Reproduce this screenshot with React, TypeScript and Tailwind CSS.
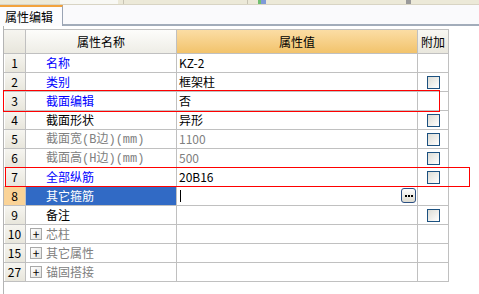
import React from 'react';

type Row = {
  no: string;
  name: string;
  value?: string;
  tone: 'blue' | 'black' | 'gray';
  check?: boolean;
  expand?: boolean;
  active?: boolean;
};

const rows: Row[] = [
  { no: '1', name: '名称', value: 'KZ-2', tone: 'blue' },
  { no: '2', name: '类别', value: '框架柱', tone: 'blue', check: true },
  { no: '3', name: '截面编辑', value: '否', tone: 'blue' },
  { no: '4', name: '截面形状', value: '异形', tone: 'black', check: true },
  { no: '5', name: '截面宽(B边)(mm)', value: '1100', tone: 'gray', check: true },
  { no: '6', name: '截面高(H边)(mm)', value: '500', tone: 'gray', check: true },
  { no: '7', name: '全部纵筋', value: '20B16', tone: 'blue', check: true },
  { no: '8', name: '其它箍筋', tone: 'black', active: true },
  { no: '9', name: '备注', tone: 'black', check: true },
  { no: '10', name: '芯柱', tone: 'gray', expand: true },
  { no: '15', name: '其它属性', tone: 'gray', expand: true },
  { no: '27', name: '锚固搭接', tone: 'gray', expand: true },
];

const toneClass = {
  blue: 'text-[#0000ff]',
  black: 'text-black',
  gray: 'text-[#808080]',
};

// latin runs get a fixed-width face so they take the room they take in the original
function Name({ text }: { text: string }) {
  const parts = text.split(/([()A-Za-z]+)/).filter(Boolean);
  return (
    <span>
      {parts.map((p, i) =>
        /^[()A-Za-z]+$/.test(p) ? (
          <span key={i} className="font-['Liberation_Mono',monospace]">
            {p}
          </span>
        ) : (
          <span key={i}>{p}</span>
        )
      )}
    </span>
  );
}

function CheckBox() {
  return (
    <div className="w-[13px] h-[13px] border border-[#1c5180] bg-linear-to-br from-[#dcdcd5] to-white" />
  );
}

function PlusBox() {
  return (
    <div className="w-[12px] h-[12px] border border-[#a8a8a8] bg-linear-to-br from-white to-[#e4e4e0] flex items-center justify-center text-black text-[12px] leading-none">
      +
    </div>
  );
}

export default function App() {
  return (
    <div className="w-[479px] h-[294px] bg-white overflow-hidden relative font-['Noto_Sans_CJK_SC',sans-serif] text-[12px] leading-none text-black">
      {/* toolbar remnant */}
      <div className="h-[5px] bg-[#ece9d8] border-b border-[#d8d4c4] flex">
        <div className="w-[60px]" />
        <div className="w-[58px] bg-[#f8f8f4]" />
        <div className="w-[6px] border-r border-[#c8c4b4]" />
        <div className="w-[124px] border-r border-[#c8c4b4]" />
        <div className="w-[10px]" />
        <div className="w-[3px] bg-[#6fbf6f]" />
        <div className="w-[5px] bg-[#7f9ad8]" />
        <div className="w-[140px]" />
        <div className="w-[5px] bg-[#9a9a9a]" />
      </div>

      {/* tab bar */}
      <div className="flex h-[21px] bg-[#fafafc]">
        <div className="w-[63px] border-t-2 border-t-[#f2a23c] border-r border-r-[#9aa4b4] bg-[#fcfcfe] flex items-center pl-[5px]">
          属性编辑
        </div>
        <div className="flex-1 border-b-2 border-[#a2acba]" />
      </div>

      {/* panel */}
      <div className="ml-[3px] h-full border-l border-[#b4b4b4] pt-[3px]">
        <div className="w-[445px] border-t border-[#c0c0c0]">
          {/* header */}
          <div className="flex h-[24px]">
            <div className="w-[22px] border-r border-b border-[#c0c0c0] bg-linear-to-b from-[#f6f5f0] to-[#e8e6dc]" />
            <div className="w-[151px] border-r border-b border-[#c0c0c0] bg-linear-to-b from-[#fdfdfb] to-[#eeede6] flex items-center justify-center">
              属性名称
            </div>
            <div className="w-[241px] border-r border-b border-[#c0c0c0] bg-linear-to-b from-[#fbdda4] to-[#f2c36b] flex items-center justify-center">
              属性值
            </div>
            <div className="w-[31px] border-r border-b border-[#c0c0c0] bg-linear-to-b from-[#f8f7f2] to-[#e9e7dd] flex items-center justify-center">
              附加
            </div>
          </div>

          {rows.map((r) => (
            <div key={r.no} className="flex h-[19px]">
              <div
                className={`w-[22px] border-r border-b border-[#c0c0c0] flex items-center justify-center ${
                  r.active
                    ? 'bg-[#fad397]'
                    : 'bg-linear-to-b from-[#f6f5f0] to-[#e8e6dc] shadow-[inset_1px_0_0_#ffffff]'
                }`}
              >
                {r.no}
              </div>
              <div
                className={`w-[151px] border-r border-b border-[#c0c0c0] flex items-center ${
                  r.active ? 'bg-[#316ac5] text-white' : toneClass[r.tone]
                } ${r.expand ? 'pl-[4px] gap-[4px]' : 'pl-[20px]'}`}
              >
                {r.expand && <PlusBox />}
                <Name text={r.name} />
              </div>
              <div className="w-[241px] border-r border-b border-[#c0c0c0] flex items-center pl-[2px] relative">
                {r.value && <span className={r.tone === 'gray' ? 'text-[#808080]' : 'text-black'}>{r.value}</span>}
                {r.active && (
                  <>
                    <div className="w-px h-[12px] bg-black ml-[1px]" />
                    <div className="absolute right-[1px] top-[1px] w-[15px] h-[15px] rounded-[3px] border border-[#2b4f82] bg-linear-to-b from-white to-[#dedbd0] flex items-center justify-center gap-[1px] pt-[1px]">
                      <span className="w-[2px] h-[2px] bg-black" />
                      <span className="w-[2px] h-[2px] bg-black" />
                      <span className="w-[2px] h-[2px] bg-black" />
                    </div>
                  </>
                )}
              </div>
              <div className="w-[31px] border-r border-b border-[#c0c0c0] flex items-center justify-center">
                {r.check && <CheckBox />}
              </div>
            </div>
          ))}
        </div>
      </div>

      {/* red highlight boxes */}
      <div className="absolute left-[3px] top-[90px] w-[437px] h-[22px] border border-[#ff0000] pointer-events-none" />
      <div className="absolute left-[5px] top-[167px] w-[465px] h-[20px] border border-[#ff0000] pointer-events-none" />
    </div>
  );
}
